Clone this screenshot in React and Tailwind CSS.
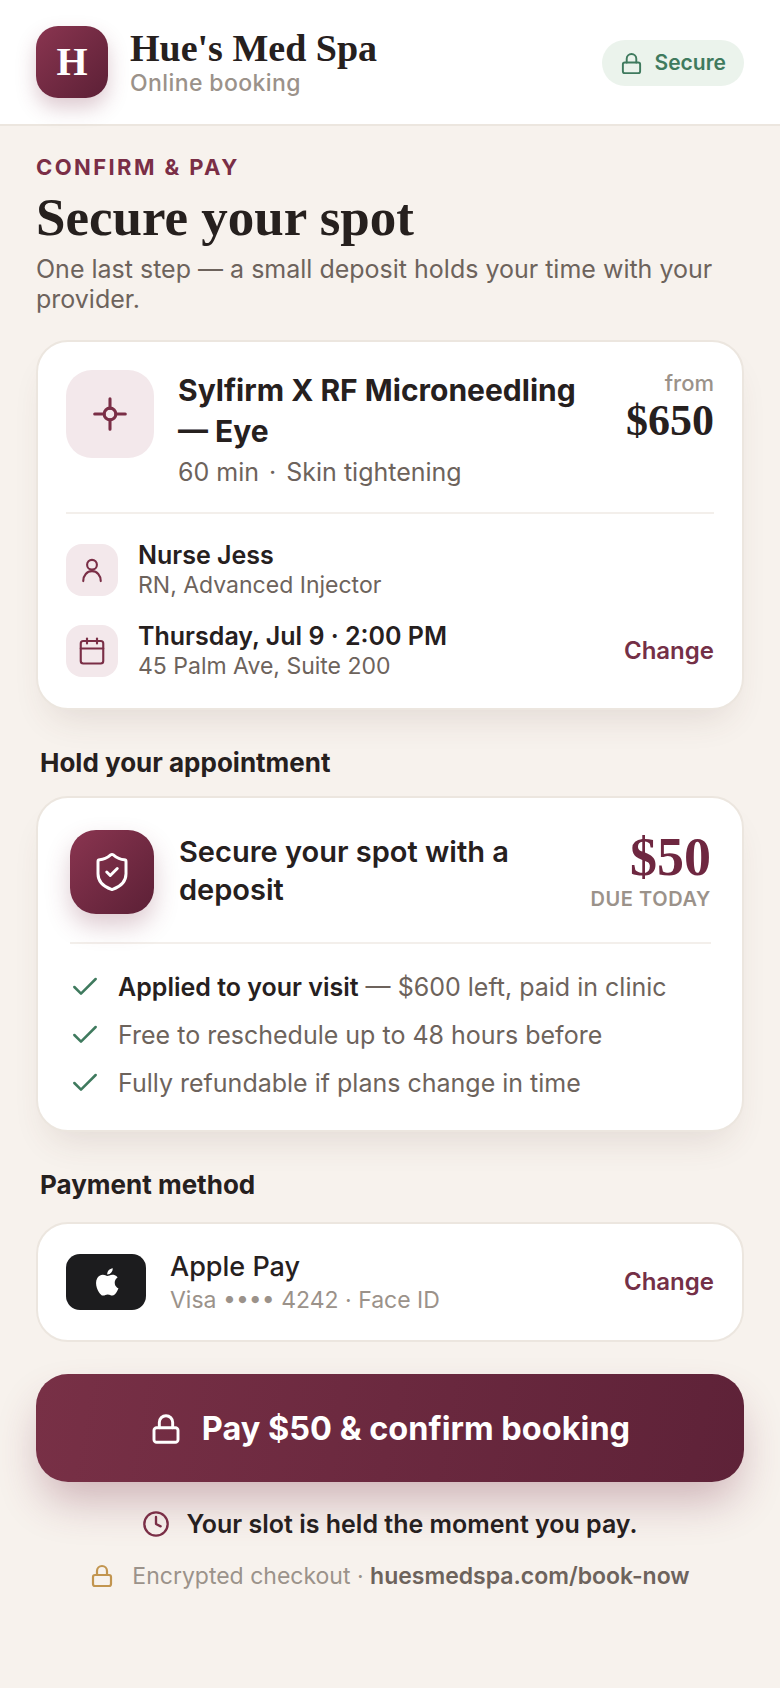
import React from "react";
import { Lock, Calendar, Check, Clock, ShieldCheck } from "lucide-react";

const serif = "font-['Liberation_Serif',serif]";

function Crosshair({ className }) {
  return (
    <svg viewBox="0 0 40 40" fill="none" stroke="currentColor" strokeWidth="3.4" strokeLinecap="round" className={className}>
      <circle cx="20" cy="20" r="6.5" />
      <path d="M20 3v10.5M20 26.5V37M3 20h10.5M26.5 20H37" />
    </svg>
  );
}

function Person({ className }) {
  return (
    <svg viewBox="0 0 24 24" fill="none" stroke="currentColor" strokeWidth="1.8" strokeLinecap="round" className={className}>
      <circle cx="12" cy="7.5" r="4.2" />
      <path d="M4.5 21.5c0-5 3.2-8.5 7.5-8.5s7.5 3.5 7.5 8.5" />
    </svg>
  );
}

function AppleLogo({ className }) {
  return (
    <svg viewBox="0 0 24 24" fill="currentColor" className={className}>
      <path d="M17.05 12.54c-.03-2.6 2.13-3.85 2.22-3.91-1.21-1.77-3.1-2.01-3.77-2.04-1.6-.16-3.13.94-3.94.94-.81 0-2.07-.92-3.4-.89-1.75.03-3.36 1.02-4.26 2.58-1.82 3.15-.46 7.82 1.3 10.38.87 1.25 1.9 2.65 3.25 2.6 1.31-.05 1.8-.84 3.38-.84s2.02.84 3.4.82c1.41-.03 2.3-1.27 3.16-2.53.99-1.45 1.4-2.86 1.43-2.93-.03-.01-2.74-1.05-2.77-4.18zM14.47 4.9c.72-.87 1.2-2.08 1.07-3.28-1.03.04-2.28.69-3.02 1.55-.66.77-1.24 2-1.09 3.18 1.15.09 2.32-.58 3.04-1.45z" />
    </svg>
  );
}

function InfoRow({ icon, title, sub, action }) {
  return (
    <div className="flex items-center">
      <div className="flex h-[52px] w-[52px] shrink-0 items-center justify-center rounded-[16px] bg-[#f3e8eb] text-[#7a2e46]">
        {icon}
      </div>
      <div className="ml-[20px] flex-1">
        <div className="text-[25px] leading-[30px] font-semibold text-[#26201e]">{title}</div>
        <div className="text-[23px] leading-[30px] text-[#6d635c]">{sub}</div>
      </div>
      {action}
    </div>
  );
}

function Bullet({ children }) {
  return (
    <li className="flex items-center">
      <Check size={32} strokeWidth={1.9} className="-ml-[1px] mr-[17px] shrink-0 text-[#3f7a5e]" />
      <span className="text-[25px] leading-[48px] text-[#6d635c]">{children}</span>
    </li>
  );
}

export default function App() {
  return (
    <div className="min-h-[1688px] bg-[#f7f2ed] font-['Inter',sans-serif] text-[#26201e]">
      {/* Header */}
      <header className="flex h-[126px] items-center justify-between border-b-2 border-[#ece6df] bg-white px-[36px]">
        <div className="flex items-center">
          <div className={`flex h-[72px] w-[72px] items-center justify-center rounded-[22px] bg-gradient-to-br from-[#8a3550] to-[#5c2036] text-[40px] font-bold text-white shadow-[0_10px_20px_rgba(122,46,70,0.25)] ${serif}`}>
            H
          </div>
          <div className="ml-[22px]">
            <div className={`text-[38px] leading-[42px] font-bold ${serif}`}>Hue's Med Spa</div>
            <div className="text-[23px] leading-[28px] font-medium tracking-[0.4px] text-[#9b928a]">Online booking</div>
          </div>
        </div>
        <div className="mt-[2px] flex h-[46px] items-center rounded-full bg-[#ebf3ec] px-[18px] text-[21px] font-semibold text-[#3f7a5e]">
          <Lock size={23} strokeWidth={2} className="mr-[12px]" />
          Secure
        </div>
      </header>

      <main className="px-[36px]">
        {/* Title */}
        <div className="pt-[28px] text-[22px] leading-[26px] font-bold tracking-[2.4px] text-[#7a2e46]">CONFIRM &amp; PAY</div>
        <h1 className={`mt-[6px] text-[53px] leading-[62px] font-bold ${serif}`}>Secure your spot</h1>
        <p className="mt-[6px] text-[25px] leading-[30px] text-[#6d635c]">One last step — a small deposit holds your time with your provider.</p>

        {/* Booking card */}
        <section className="mt-[26px] rounded-[32px] border-2 border-[#ece6df] bg-white px-[28px] pt-[28px] pb-[27px] shadow-[0_20px_36px_-14px_rgba(90,60,50,0.14)]">
          <div className="flex border-b-2 border-[#f3efeb] pb-[22px]">
            <div className="flex h-[88px] w-[88px] shrink-0 items-center justify-center rounded-[26px] bg-[#f3e8eb] text-[#7a2e46]">
              <Crosshair className="h-[36px] w-[36px]" />
            </div>
            <div className="ml-[24px] flex-1">
              <div className="text-[30px] leading-[41px] font-bold">Sylfirm X RF Microneedling — Eye</div>
              <div className="mt-[2px] text-[25px] leading-[36px] text-[#6d635c]">60 min <span className="mx-[3px]">·</span> Skin tightening</div>
            </div>
            <div className="ml-[20px] shrink-0 text-right">
              <div className="text-[22px] leading-[26px] font-medium text-[#9b928a]">from</div>
              <div className={`mt-[2px] text-[44px] leading-[46px] font-bold ${serif}`}>$650</div>
            </div>
          </div>
          <div className="mt-[26px] flex flex-col gap-[21px]">
            <InfoRow icon={<Person className="h-[28px] w-[28px]" />} title="Nurse Jess" sub="RN, Advanced Injector" />
            <InfoRow
              icon={<Calendar size={30} strokeWidth={1.7} />}
              title="Thursday, Jul 9 · 2:00 PM"
              sub="45 Palm Ave, Suite 200"
              action={<span className="text-[24px] font-semibold text-[#743047]">Change</span>}
            />
          </div>
        </section>

        {/* Deposit card */}
        <h2 className="mt-[38px] ml-[4px] text-[26px] leading-[30px] font-bold">Hold your appointment</h2>
        <section className="mt-[18px] rounded-[32px] border-2 border-[#ece6df] bg-white pt-[32px] pr-[31px] pb-[23px] pl-[32px] shadow-[0_20px_36px_-14px_rgba(90,60,50,0.14)]">
          <div className="flex border-b-2 border-[#f3efeb] pb-[28px]">
            <div className="flex h-[84px] w-[84px] shrink-0 items-center justify-center rounded-[26px] bg-gradient-to-br from-[#8a3550] to-[#5c2036] text-white shadow-[0_12px_24px_rgba(122,46,70,0.25)]">
              <ShieldCheck size={42} strokeWidth={1.7} />
            </div>
            <div className="ml-[25px] flex-1 pt-[3px] text-[29px] leading-[38px] font-semibold">Secure your spot with a deposit</div>
            <div className="ml-[20px] shrink-0 text-right">
              <div className={`text-[54px] leading-[54px] font-bold text-[#6e2740] ${serif}`}>$50</div>
              <div className="mt-[2px] text-[20px] leading-[26px] font-semibold tracking-[0.6px] text-[#9b928a]">DUE TODAY</div>
            </div>
          </div>
          <ul className="mt-[19px]">
            <Bullet><strong className="font-semibold text-[#26201e]">Applied to your visit</strong> — $600 left, paid in clinic</Bullet>
            <Bullet>Free to reschedule up to 48 hours before</Bullet>
            <Bullet>Fully refundable if plans change in time</Bullet>
          </ul>
        </section>

        {/* Payment method */}
        <h2 className="mt-[38px] ml-[4px] text-[26px] leading-[30px] font-bold">Payment method</h2>
        <section className="mt-[22px] flex h-[120px] items-center rounded-[32px] border-2 border-[#ece6df] bg-white px-[28px]">
          <div className="flex h-[56px] w-[80px] shrink-0 items-center justify-center rounded-[14px] bg-[#1c1c1e] text-white">
            <AppleLogo className="ml-[3px] h-[32px] w-[32px]" />
          </div>
          <div className="ml-[24px] flex-1 pt-[2px]">
            <div className="text-[27px] leading-[32px] font-medium">Apple Pay</div>
            <div className="mt-[2px] text-[23px] leading-[30px] text-[#9b928a]">Visa •••• 4242 · Face ID</div>
          </div>
          <span className="text-[24px] font-semibold text-[#743047]">Change</span>
        </section>

        {/* CTA */}
        <button className="mt-[32px] flex h-[108px] w-full items-center justify-center rounded-[32px] bg-[linear-gradient(100deg,#783046,#5e2238)] pt-[2px] text-[32.5px] font-bold text-white shadow-[0_24px_44px_-6px_rgba(122,46,70,0.32)]">
          <Lock size={32} strokeWidth={2.2} className="mr-[20px]" />
          Pay $50 &amp; confirm booking
        </button>
        <div className="mt-[26px] flex items-center justify-center text-[25px] leading-[32px] font-semibold">
          <Clock size={28} strokeWidth={2} className="mr-[16px] text-[#7a2e46]" />
          Your slot is held the moment you pay.
        </div>
        <div className="mt-[21px] flex items-center justify-center text-[23px] leading-[30px] text-[#9b928a]">
          <Lock size={24} strokeWidth={2.2} className="mr-[18px] text-[#c2954f]" />
          Encrypted checkout ·&nbsp;<span className="font-semibold text-[#6d635c]">huesmedspa.com/book-now</span>
        </div>
      </main>
    </div>
  );
}
